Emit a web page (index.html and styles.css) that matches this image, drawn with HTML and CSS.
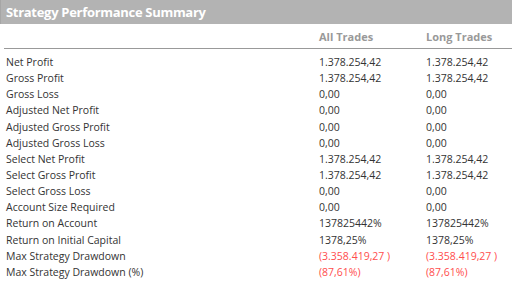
FILE: index.html
```html
<!DOCTYPE html>
<html>
<head>
<meta charset="utf-8">
<link rel="stylesheet" href="styles.css">
</head>
<body>
<div class="panel">
  <div class="title">Strategy Performance Summary</div>
  <table class="summary">
    <thead>
      <tr><th class="lbl"></th><th>All Trades</th><th>Long Trades</th></tr>
    </thead>
    <tbody>
      <tr><td class="lbl">Net Profit</td><td>1.378.254,42</td><td>1.378.254,42</td></tr>
      <tr><td class="lbl">Gross Profit</td><td>1.378.254,42</td><td>1.378.254,42</td></tr>
      <tr><td class="lbl">Gross Loss</td><td>0,00</td><td>0,00</td></tr>
      <tr><td class="lbl">Adjusted Net Profit</td><td>0,00</td><td>0,00</td></tr>
      <tr><td class="lbl">Adjusted Gross Profit</td><td>0,00</td><td>0,00</td></tr>
      <tr><td class="lbl">Adjusted Gross Loss</td><td>0,00</td><td>0,00</td></tr>
      <tr><td class="lbl">Select Net Profit</td><td>1.378.254,42</td><td>1.378.254,42</td></tr>
      <tr><td class="lbl">Select Gross Profit</td><td>1.378.254,42</td><td>1.378.254,42</td></tr>
      <tr><td class="lbl">Select Gross Loss</td><td>0,00</td><td>0,00</td></tr>
      <tr><td class="lbl">Account Size Required</td><td>0,00</td><td>0,00</td></tr>
      <tr><td class="lbl">Return on Account</td><td>137825442%</td><td>137825442%</td></tr>
      <tr><td class="lbl">Return on Initial Capital</td><td>1378,25%</td><td>1378,25%</td></tr>
      <tr><td class="lbl">Max Strategy Drawdown</td><td class="neg">(3.358.419,27 )</td><td class="neg">(3.358.419,27 )</td></tr>
      <tr><td class="lbl">Max Strategy Drawdown (%)</td><td class="neg">(87,61%)</td><td class="neg">(87,61%)</td></tr>
    </tbody>
  </table>
</div>
</body>
</html>
```

FILE: styles.css
```css
html, body {
  margin: 0;
  padding: 0;
  background: #fff;
}
body {
  font-family: "Open Sans", "Noto Sans", sans-serif;
  width: 512px;
  height: 282px;
  overflow: hidden;
}
.title {
  height: 24px;
  background: #b3b3b3;
  border-left: 1px solid #a6a6a6;
  color: #fff;
  font-weight: bold;
  font-size: 13px;
  letter-spacing: -0.3px;
  line-height: 25px;
  padding-left: 5px;
}
.summary {
  border-collapse: collapse;
  margin-left: 4px;
  width: 508px;
  font-size: 10.5px;
  color: #333;
}
.summary th {
  text-align: left;
  color: #999;
  font-weight: bold;
  font-size: 11px;
  height: 20px;
  padding: 0;
  vertical-align: bottom;
  padding-bottom: 4px;
  border-bottom: 1px solid #999;
}
.summary td {
  padding: 0;
  height: 16.15px;
  line-height: 16px;
  white-space: nowrap;
}
.summary tbody tr:first-child td {
  padding-top: 5px;
}
.summary .lbl {
  width: 313px;
  padding-left: 2px;
}
.summary th:nth-child(2), .summary td:nth-child(2) {
  width: 107px;
}
.neg {
  color: #ff4d4d;
}
```
